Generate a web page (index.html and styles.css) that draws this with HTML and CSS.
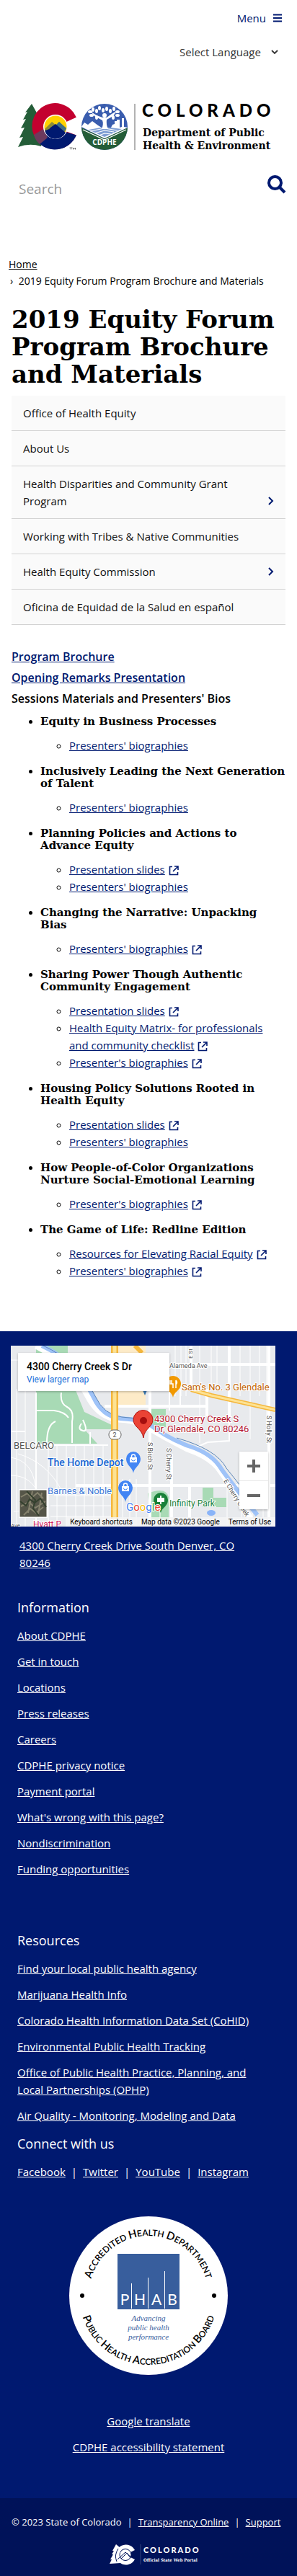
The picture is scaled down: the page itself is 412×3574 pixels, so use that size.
FILE: index.html
```html
<!DOCTYPE html>
<html lang="en">
<head>
<meta charset="utf-8">
<meta name="viewport" content="width=device-width, initial-scale=1">
<title>2019 Equity Forum Program Brochure and Materials</title>
<link rel="stylesheet" href="styles.css">
</head>
<body>
<svg class="defs" aria-hidden="true">
  <symbol id="ext" viewBox="0 0 14 14"><path d="M5 1.500H1.500v11h11V9M8 1h5v5M13 1 6 8" fill="none" stroke="currentColor" stroke-width="1.600"/></symbol>
  <symbol id="bag" viewBox="0 0 20 30"><path d="M10 30C9 22 0 19 0 10a10 10 0 0 1 20 0c0 9-9 12-10 20z"/><path d="M5 8h10v7H5z" fill="#fff"/><path d="M7.500 8V6.500a2.500 2.500 0 0 1 5 0V8" fill="none" stroke="#fff" stroke-width="1.500"/><path d="M7.500 10.500a2.500 2.500 0 0 0 5 0" fill="none" stroke="#4285f4"/></symbol>
</svg>
<header class="top">
  <button class="menu" type="button">Menu
    <svg width="12" height="12" viewBox="0 0 12 12" aria-hidden="true"><path d="M0 1.500h12M0 6h12M0 10.500h12" stroke="currentColor" stroke-width="2"/></svg>
  </button>
  <div class="lang">
    <select aria-label="Select Language"><option>Select Language</option></select>
    <svg width="10" height="6" viewBox="0 0 10 6" aria-hidden="true"><path d="m1 1 4 4 4-4" fill="none" stroke="#333" stroke-width="1.800"/></svg>
  </div>
  <a class="logo" href="#" aria-label="Colorado Department of Public Health and Environment">
    <svg viewBox="0 0 362 65">
      <path d="M19 0 10 12l3-1-6 11 4-1-7 13 5-1-7 14 5-1L0 60q16-6 32-1l9-40-12-1z" fill="#245d38"/>
      <path d="M80.900 18.700A32 32 0 1 0 80.900 43.500L66 38a15 15 0 1 1 0-12.500z" fill="#c3002f"/>
      <path d="M80.900 43.500A32 32 0 0 1 29 54.500L39 39h27z" fill="#001970"/>
      <path d="m22 43 13-8 6 12-11 9q-6-5-8-13z" fill="#6d3a5d"/>
      <circle cx="52" cy="32" r="17" fill="#fff"/>
      <circle cx="52" cy="32" r="15.500" fill="#ffd100"/>
      <path d="m37 35 10-10 6 5 4-5 10 9-3 8H41z" fill="#8b8d35"/><path d="m50 32 7-7 10 9-4 6z" fill="#3f6f86"/>
      <path d="M37 37q6-1 8-4l7-5 14 12a15.500 15.500 0 0 1-29-3z" fill="#001970"/>
      <path d="M71.500 61h4m-2 0v2.500m3 0V61l1.500 1.500L79.500 61v2.500" stroke="#333" stroke-width=".7" fill="none"/>
      <clipPath id="badge"><circle cx="120" cy="32" r="32"/></clipPath>
      <g clip-path="url(#badge)">
        <path d="M88 0h64v64H88z" fill="#3a5dae"/>
        <path d="m88 33 32 15 32-15v31H88z" fill="#245d38"/>
        <path d="m88 32 4-6 5 3 6-5 8 6 5 3h13l2-4 3-1v-4h3v-2h4v11l3-1V20h3v12l5 1-32 15z" fill="#fff"/>
        <path d="m98 36 22-4 24 3-24 11z" fill="#7f9ed3"/>
        <path d="m100 38 20-4 18 3M106 41l14-4 13 2M112 44l8-3 9 1M90 36l30 14 30-14" stroke="#fff" stroke-width="1.200" fill="none"/>
        <path d="M116 35q3-7 1-12l-11-6-5-6 8 5 8 3h6l7-5 7-4-5 7-9 5q-1 7 2 13z" fill="#fff"/>
        <circle cx="120" cy="16" r="3" fill="#fff"/>
        <g fill="#fff"><ellipse cx="100" cy="11" rx="3" ry="2"/><ellipse cx="104" cy="8" rx="2" ry="3"/><ellipse cx="109" cy="10" rx="2" ry="3"/><ellipse cx="113" cy="6" rx="2" ry="3"/><ellipse cx="118" cy="9" rx="2" ry="3"/><ellipse cx="123" cy="7" rx="2" ry="3"/><ellipse cx="128" cy="10" rx="2" ry="3"/><ellipse cx="133" cy="7" rx="2" ry="3"/><ellipse cx="138" cy="11" rx="3" ry="2"/><ellipse cx="102" cy="16" rx="3" ry="2"/><ellipse cx="109" cy="19" rx="2" ry="3"/><ellipse cx="132" cy="19" rx="2" ry="3"/><ellipse cx="138" cy="16" rx="3" ry="2"/></g>
      </g>
      <text class="mark-cdphe" x="120" y="57" text-anchor="middle">CDPHE</text>
      <path d="M162 0v64" stroke="#666"/>
      <text class="mark-state" x="172" y="18">COLORADO</text>
      <text class="mark-dept" x="173" y="45">Department of Public</text>
      <text class="mark-dept" x="173" y="63">Health &amp; Environment</text>
    </svg>
  </a>
  <form class="search">
    <input type="search" placeholder="Search" aria-label="Search">
    <button type="button" aria-label="Search"><svg width="26" height="26" viewBox="0 0 26 26"><circle cx="10.500" cy="10.500" r="8.500" fill="none" stroke="currentColor" stroke-width="4"/><path d="m16 16 8 8" stroke="currentColor" stroke-width="4"/></svg></button>
  </form>
</header>

<nav class="crumbs" aria-label="Breadcrumb"><a href="#">Home</a><p>› <span>2019 Equity Forum Program Brochure and Materials</span></p></nav>

<main>
  <h1>2019 Equity Forum Program Brochure and Materials</h1>
  <nav class="side" aria-label="Section">
    <a href="#">Office of Health Equity</a>
    <a href="#">About Us</a>
    <a href="#">Health Disparities and Community Grant Program<svg viewBox="0 0 8 12"><path d="m1 1 5 5-5 5"/></svg></a>
    <a href="#">Working with Tribes &amp; Native Communities</a>
    <a href="#">Health Equity Commission<svg viewBox="0 0 8 12"><path d="m1 1 5 5-5 5"/></svg></a>
    <a href="#">Oficina de Equidad de la Salud en español</a>
  </nav>
  <div class="lead">
    <p><a href="#">Program Brochure</a></p>
    <p><a href="#">Opening Remarks Presentation</a></p>
    <p>Sessions Materials and Presenters' Bios</p>
  </div>
  <ul class="sessions">
    <li><h2>Equity in Business Processes</h2><ul><li><a href="#">Presenters' biographies</a></li></ul></li>
    <li><h2>Inclusively Leading the Next Generation of Talent</h2><ul><li><a href="#">Presenters' biographies</a></li></ul></li>
    <li><h2>Planning Policies and Actions to Advance Equity</h2><ul><li><a href="#">Presentation slides</a><svg><use href="#ext"/></svg></li><li><a href="#">Presenters' biographies</a></li></ul></li>
    <li><h2>Changing the Narrative: Unpacking Bias</h2><ul><li><a href="#">Presenters' biographies</a><svg><use href="#ext"/></svg></li></ul></li>
    <li><h2>Sharing Power Though Authentic Community Engagement</h2><ul><li><a href="#">Presentation slides</a><svg><use href="#ext"/></svg></li><li><a href="#">Health Equity Matrix- for professionals and community checklist</a><svg><use href="#ext"/></svg></li><li><a href="#">Presenter's biographies</a><svg><use href="#ext"/></svg></li></ul></li>
    <li><h2>Housing Policy Solutions Rooted in Health Equity</h2><ul><li><a href="#">Presentation slides</a><svg><use href="#ext"/></svg></li><li><a href="#">Presenters' biographies</a></li></ul></li>
    <li><h2>How People-of-Color Organizations Nurture Social-Emotional Learning</h2><ul><li><a href="#">Presenter's biographies</a><svg><use href="#ext"/></svg></li></ul></li>
    <li><h2>The Game of Life: Redline Edition</h2><ul><li><a href="#">Resources for Elevating Racial Equity</a><svg><use href="#ext"/></svg></li><li><a href="#">Presenters' biographies</a><svg><use href="#ext"/></svg></li></ul></li>
  </ul>
</main>

<footer>
  <div class="map">
    <svg class="tiles" viewBox="0 0 367 251" preserveAspectRatio="xMidYMid slice">
      <path d="M0 0h367v251H0z" fill="#e8eaed"/>
      <path d="M139 0h48v84h-48z" fill="#fdebc8"/>
      <path d="M35 0h44v20H35zM35 62h55l12 30 38 18v6H102l18 20H35zM195 88h20v25h-20z" fill="#a8dab5"/>
      <path d="M190 205q25-10 29 5v32h-25zM266 197h15v14h18v13h-33z" fill="#a8dab5"/>
      <ellipse cx="278" cy="232" rx="6" ry="4" fill="#8ab4f8"/>
      <g fill="none" stroke="#fff" stroke-width="1">
        <path d="M0 20h40M8 60v191M20 60v191M52 138v113M64 138v113M77 138v113M90 138v113M102 138v113M115 138v113M128 138v113M155 185v66M165 185v66M174 185v66M228 0v70M236 0v70M243 0v70M262 0v135M278 0v60M286 0v60M318 0v70M332 0v130M345 0v70M355 0v130M207 210v41M300 195v56M320 195v56M335 195v56M350 195v56M0 155q30 5 34 40t-30 35M10 150q40 12 60 50M0 180q30 0 40 30M55 222h85M55 237h85M60 208h80"/>
      </g>
      <g fill="none" stroke="#fff" stroke-width="2">
        <path d="M35 65v180M35 90h25q15 2 20 10M70 65q-2 15 8 20t7 20v30M50 135q0-25 12-30M110 120v16M35 138h100M98 108q-6 8 2 10t0-15M220 40v50M235 60v25M303 30v102l-30 2-18 8M0 119h20"/>
      </g>
      <g fill="none" stroke="#fff" stroke-width="4">
        <path d="M193 62v189M223 150v101M250 0v60M303 0v100M272 60v38M358 0v251M130 84h142M215 26h152M90 194h277M248 194v57"/>
      </g>
      <path d="M35 0q50 25 75 75 15 25 40 27 20 1 35 8 30 18 60 33 35 12 47 32 15 20 40 65" fill="none" stroke="#fff" stroke-width="9"/>
      <path d="M43 0q48 22 72 72 12 26 37 29 20 1 36 5 28 22 58 33 33 10 46 32 14 20 50 64" fill="none" stroke="#9fc3f8" stroke-width="6"/>
      <path d="M45 0q48 22 72 70 12 26 37 29l30 3M230 128q56 16 69 42l40 50" fill="none" stroke="#5c86b8" stroke-width="1"/>
      <path d="M144 0v240" stroke="#f5b73c" stroke-width="10"/><path d="M144 0v240" stroke="#fde293" stroke-width="5"/>
      <path d="m172 0 10 10M250 61l28 8 89 20" fill="none" stroke="#f5b73c" stroke-width="6"/><path d="m250 61 28 8 89 20" fill="none" stroke="#fde293" stroke-width="3"/>
      <rect x="136" y="117" width="17" height="13" rx="6" fill="#fff" stroke="#666"/>
      <path d="M183 62h6l-3 7z" fill="#3b78b0"/>
      <path d="M225 72c-1-8-11-10-11-19a11 11 0 0 1 22 0c0 9-10 11-11 19z" fill="#f29900"/>
      <path d="M221 48v5h4v6m-2-11v5m6-5v11m0-11q3 3 0 6" fill="none" stroke="#fff" stroke-width="1.500"/>
      <path d="M184 128c-2-13-14-15-14-25a13 13 0 0 1 27 0c0 10-12 12-13 25z" fill="#ea4335" stroke="#b31412"/>
      <circle cx="184" cy="104" r="5" fill="#a50e0e"/>
      <use href="#bag" x="160" y="147" width="20" height="30" fill="#4285f4"/><use href="#bag" x="149" y="187" width="20" height="30" fill="#4285f4"/>
      <path d="M208 232c-2-8-10-9-10-18a10 10 0 0 1 20 0c0 9-8 10-10 18z" fill="#188038"/>
      <path d="M208 208v12m-4-8h8v4h-8z" stroke="#fff" stroke-width="2" fill="#fff"/>
      <g class="map-text">
        <text x="144" y="127" font-size="9" text-anchor="middle">2</text>
        <text x="220" y="31" font-size="9">Alameda Ave</text>
        <text x="237" y="62" font-size="13" fill="#c26401">Sam's No. 3 Glendale</text>
        <text x="199" y="106" font-size="13" fill="#b3122b">4300 Cherry Creek S</text>
        <text x="199" y="120" font-size="13" fill="#b3122b">Dr, Glendale, CO 80246</text>
        <text x="4" y="143" font-size="13">BELCARO</text>
        <text x="51" y="167" font-size="14" font-weight="500" fill="#1967d2">The Home Depot</text>
        <text x="51" y="206" font-size="13" fill="#3b78d8">Barnes &amp; Noble</text>
        <text x="220" y="223" font-size="12" fill="#188038">Infinity Park</text>
        <text x="31" y="252" font-size="12" fill="#d01f63">Hyatt P</text>
        <text x="0" y="252" font-size="8">Ave</text>
        <text transform="translate(190 134) rotate(90)" font-size="9">S Birch St</text>
        <text transform="translate(216 142) rotate(90)" font-size="9">S Cherry St</text>
        <text transform="translate(355 97) rotate(90)" font-size="9">S Holly St</text>
        <text transform="translate(252 18) rotate(-90)" font-size="8">E St</text>
        <text transform="translate(295 188) rotate(58)" font-size="9">E Cherry Creek</text>
        <text x="160" y="229" font-size="15"><tspan fill="#4285f4">G</tspan><tspan fill="#ea4335">o</tspan><tspan fill="#fbbc04">o</tspan><tspan fill="#4285f4">g</tspan><tspan fill="#34a853">l</tspan><tspan fill="#ea4335">e</tspan></text>
      </g>
      <rect x="11" y="199" width="40" height="40" rx="1" fill="#fff"/><path d="M12.500 200.500h37v37h-37z" fill="#555548"/>
      <path d="m14 210 9-5 6 6 8-7 8 8M14 223l11-6 9 8 14-9M18 235l9-9 8 6 10-8M30 202l-6 30M43 204l-5 30" fill="none" stroke="#85826d" stroke-width="2"/>
      <path d="m13 216 8 6 5-9 7 5 8-6 8 12M22 202l12 12-3 12 8 10" fill="none" stroke="#34402e" stroke-width="2"/>
    </svg>
    <div class="place"><strong>4300 Cherry Creek S Dr</strong><a href="#">View larger map</a></div>
    <div class="zoom"><button type="button" aria-label="Zoom in"><svg viewBox="0 0 18 18"><path d="M9 0v18M0 9h18"/></svg></button><button type="button" aria-label="Zoom out"><svg viewBox="0 0 18 18"><path d="M0 9h18"/></svg></button></div>
    <div class="legal"><span>Keyboard shortcuts</span><span>Map data ©2023 Google</span><span>Terms of Use</span></div>
  </div>
  <p class="address"><a href="#">4300 Cherry Creek Drive South Denver, CO 80246</a></p>
  <section class="links info">
    <h2>Information</h2>
    <p><a href="#">About CDPHE</a></p><p><a href="#">Get in touch</a></p><p><a href="#">Locations</a></p><p><a href="#">Press releases</a></p><p><a href="#">Careers</a></p><p><a href="#">CDPHE privacy notice</a></p><p><a href="#">Payment portal</a></p><p><a href="#">What's wrong with this page?</a></p><p><a href="#">Nondiscrimination</a></p><p><a href="#">Funding opportunities</a></p>
  </section>
  <section class="links">
    <h2>Resources</h2>
    <p><a href="#">Find your local public health agency</a></p><p><a href="#">Marijuana Health Info</a></p><p><a href="#">Colorado Health Information Data Set (CoHID)</a></p><p><a href="#">Environmental Public Health Tracking</a></p><p><a href="#">Office of Public Health Practice, Planning, and Local Partnerships (OPHP)</a></p><p><a href="#">Air Quality - Monitoring, Modeling and Data</a></p>
    <h2>Connect with us</h2>
    <p class="social"><a href="#">Facebook</a><span>|</span><a href="#">Twitter</a><span>|</span><a href="#">YouTube</a><span>|</span><a href="#">Instagram</a></p>
  </section>
  <svg class="seal" width="220" height="220" viewBox="0 0 220 220" role="img" aria-label="PHAB accreditation seal">
    <defs><path id="arcTop" d="M27 110a83 83 0 0 1 166 0"/><path id="arcBottom" d="M14 110a96 96 0 0 0 192 0"/></defs>
    <circle cx="110" cy="110" r="110" fill="#fff"/>
    <text class="ring"><textPath href="#arcTop" startOffset="50%" text-anchor="middle"><tspan class="cap">A</tspan>CCREDITED <tspan class="cap">H</tspan>EALTH <tspan class="cap">D</tspan>EPARTMENT</textPath></text>
    <text class="ring"><textPath href="#arcBottom" startOffset="50%" text-anchor="middle"><tspan class="cap">P</tspan>UBLIC <tspan class="cap">H</tspan>EALTH <tspan class="cap">A</tspan>CCREDITATION <tspan class="cap">B</tspan>OARD</textPath></text>
    <circle cx="18" cy="110" r="3"/><circle cx="201" cy="110" r="3"/>
    <path d="M67 52h86v77H67z" fill="#385e9d"/>
    <path d="M86.500 93v35M109.500 85v43M132.500 76v52" stroke="#fff"/>
    <g class="phab"><text x="77" y="123">P</text><text x="98" y="123">H</text><text x="121" y="123">A</text><text x="143" y="123">B</text></g>
    <g class="motto"><text x="110" y="145">Advancing</text><text x="110" y="158">public health</text><text x="110" y="171">performance</text></g>
  </svg>
  <div class="center"><p><a href="#">Google translate</a></p><p><a href="#">CDPHE accessibility statement</a></p></div>
  <div class="bottom">
    <p><span>© 2023 State of Colorado</span><span>|</span><a href="#">Transparency Online</a><span>|</span><a href="#">Support</a></p>
    <svg class="portal" width="136" height="30" viewBox="0 0 136 30" role="img" aria-label="Colorado Official State Web Portal">
      <path d="m9 0 7 6-1 20-15 1 3-6H1l4-7H3l3-5H4z" fill="#fff"/>
      <path d="M35 8A14 14 0 1 0 35 21l-6-3a8 8 0 1 1 0-7z" fill="#fff"/>
      <circle cx="22" cy="14.500" r="8" fill="#fff" stroke="#001259"/>
      <path d="M10 24q-4-9 2-18M11 21l11-10 8 7M16 20l8-8 5 7" fill="none" stroke="#001259"/>
      <path d="M43 0v28" stroke="#34457f"/>
      <text class="p-state" x="47" y="12">COLORADO</text><text class="p-sub" x="47" y="24">Official State Web Portal</text>
    </svg>
  </div>
</footer>
</body>
</html>
```
FILE: styles.css
```css
* { box-sizing: border-box; }
body { margin: 0; background: #fff; color: #000; font: 15px/24px "Open Sans", "Noto Sans", sans-serif; }
h1, h2, p, ul { margin: 0; padding: 0; }
button, select, input { font: inherit; border: 0; background: none; padding: 0; margin: 0; }
.defs { position: absolute; width: 0; height: 0; }

.top { display: flex; flex-direction: column; }
.menu { align-self: flex-end; display: flex; align-items: center; gap: 10px; margin: 13px 21px 0 0; color: #001970; line-height: 24px; }
.lang { align-self: flex-end; display: flex; align-items: center; gap: 14px; margin: 23px 26px 0 0; }
.lang select { appearance: none; color: #333; line-height: 24px; }
.logo { display: block; margin: 60px 25px 0; }
.logo svg { display: block; width: 100%; overflow: visible; }
.mark-cdphe { font: 700 10px "Open Sans", sans-serif; fill: #fff; }
.mark-state { font: 900 24px Lato, sans-serif; letter-spacing: 6px; }
.mark-dept { font: 700 14px "DejaVu Serif", serif; }
.search { display: flex; align-items: flex-start; margin: 34px 15px 0 26px; height: 80px; }
.search input { flex: 1; min-width: 0; font-size: 19px; height: 38px; }
.search input::placeholder { color: #999; opacity: 1; }
.search button { color: #001970; height: 26px; }
.search svg { display: block; }

.crumbs { margin: 32px 12px 0; font-size: 14px; line-height: 23px; }
.crumbs a { color: inherit; }
.crumbs p { padding-left: 2px; }
.crumbs span { margin-left: 4px; }

main { padding: 0 16px 72px; }
h1 { margin-top: 23px; font: 700 34px/38px "DejaVu Serif", serif; }
.side { margin-top: 11px; }
.side a { display: flex; align-items: flex-end; justify-content: space-between; gap: 32px; padding: 12px 16px; background: #fafafa; border-bottom: 1px solid #d3d3d3; color: #111; text-decoration: none; }
.side svg { flex: none; width: 8px; height: 12px; margin-bottom: 6px; fill: none; stroke: #001970; stroke-width: 2; }
.lead { margin-top: 30px; font-size: 16px; font-weight: 600; line-height: 29px; }
.lead a, .sessions a { color: #001970; }
.sessions { margin: 9px 0 0 40px; font: 15px/17px "DejaVu Serif", serif; }
.sessions > li { margin-bottom: 16px; }
.sessions > li:last-child { margin-bottom: 0; }
.sessions h2 { font: 700 15px/17px "DejaVu Serif", serif; }
.sessions ul { margin: 12px 8px 0 40px; list-style: circle; font: 15px/24px "Open Sans", "Noto Sans", sans-serif; }
.sessions svg { width: 14px; height: 14px; margin-left: 5px; vertical-align: -3px; color: #001970; }

footer { background: #001970; color: #fff; padding-top: 20px; }
footer a { color: inherit; }
.map { position: relative; margin: 0 30px 0 15px; font-family: Roboto, sans-serif; }
.tiles { display: block; width: 100%; }
.map-text { fill: #555; }
.map-text text { paint-order: stroke; stroke: #fff; stroke-width: 2px; }
.place { position: absolute; left: 10px; top: 10px; width: 210px; height: 53px; padding: 10px 12px; background: #fff; box-shadow: 0 1px 3px #0004; display: flex; flex-direction: column; color: #000; }
.place strong { font-size: 14px; line-height: 18px; font-weight: 500; }
.place a { color: #1a6ed8; font-size: 12px; line-height: 18px; text-decoration: none; }
.zoom { position: absolute; right: 10px; bottom: 24px; width: 40px; background: #fff; box-shadow: 0 1px 3px #0004; }
.zoom button { display: grid; place-items: center; width: 100%; height: 40px; }
.zoom button + button { border-top: 1px solid #e6e6e6; }
.zoom svg { width: 18px; height: 18px; stroke: #666; stroke-width: 4; }
.legal { position: absolute; right: 0; bottom: 0; display: flex; gap: 12px; padding: 0 6px 0 4px; background: #f5f5f5cc; color: #000; font-size: 10px; line-height: 13px; }
.address { margin: 14px 60px 0 27px; }
.links { padding: 38px 40px 0 24px; }
.info { padding-bottom: 12px; margin-bottom: 13px; }
.links h2 { font-size: 18px; line-height: 24px; font-weight: 400; margin: 0 0 15px; }
.links p { margin-bottom: 12px; }
.links p + h2 { margin-top: 15px; }
.social, .bottom p { display: flex; gap: 8px; }
.seal { display: block; margin: 50px auto 0; }
.ring { font: 600 12px Lato, sans-serif; }
.cap { font-size: 15px; }
.phab { font: 21px Lato, sans-serif; fill: #fff; text-anchor: middle; }
.motto { font: italic 11px "Liberation Serif", serif; fill: #385e9d; text-anchor: middle; }
.center { padding: 52px 24px 47px; text-align: center; }
.center p { margin-bottom: 12px; }
.center p:last-child { margin-bottom: 12px; }
.bottom { background: #001259; padding: 21px 16px 16px; font-size: 13px; }
.bottom p { white-space: nowrap; }
.portal { display: block; margin: 19px auto 0 136px; }
.p-state { font: 900 11px Lato, sans-serif; letter-spacing: 2px; fill: #fff; }
.p-sub { font: 700 6px "DejaVu Serif Condensed", "DejaVu Serif", serif; fill: #fff; }
```
